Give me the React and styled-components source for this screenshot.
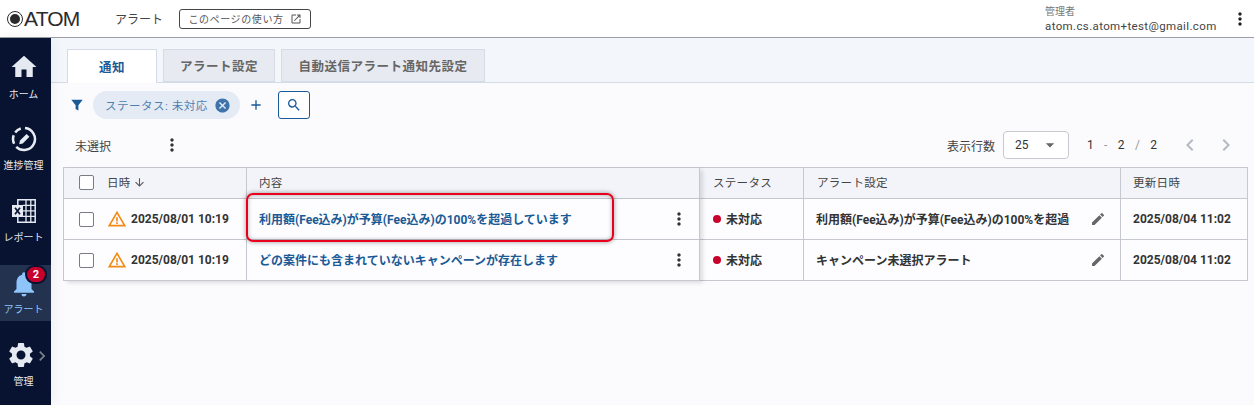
import React from "react";
import styled, { createGlobalStyle } from "styled-components";
import {
  MdHome,
  MdNotifications,
  MdSettings,
  MdChevronLeft,
  MdChevronRight,
  MdMoreVert,
  MdOpenInNew,
  MdSearch,
  MdAdd,
  MdCancel,
  MdArrowDropDown,
  MdArrowDownward,
  MdEdit,
  MdWarningAmber,
} from "react-icons/md";

const FONT = `Roboto, "Noto Sans CJK JP", sans-serif`;
const BLUE = "#1a5a96";

const Global = createGlobalStyle`
  html, body { margin: 0; padding: 0; height: 100%; overflow: hidden; }
  body { font-family: ${FONT}; color: #333; background: #fbfbfe; }
  * { box-sizing: border-box; }
`;

const ProgressIcon = () => (
  <svg width="26" height="26" viewBox="0 0 26 26" fill="none">
    <path d="M14 2.05A11 11 0 1 1 5.2 20.8" stroke="#e8ecf4" strokeWidth="2.5" />
    <path d="M3.1 17.7A11 11 0 0 1 2.7 9.2" stroke="#e8ecf4" strokeWidth="2.5" />
    <path d="M4.2 6.4A11 11 0 0 1 9.8 2.5" stroke="#e8ecf4" strokeWidth="2.5" />
    <path d="M8.2 18.2L9 14.6L15.6 8L18.4 10.8L11.8 17.4Z" fill="#e8ecf4" />
  </svg>
);

const ExcelIcon = () => (
  <svg width="24" height="24" viewBox="0 0 24 24">
    <path d="M5.8 0.8H23.2V23.2H5.8Z" fill="none" stroke="#e4e9f2" strokeWidth="1.5" />
    <path d="M14 1V23M18.8 1V23M11 6.3H23M11 11.8H23M11 17.3H23" stroke="#e4e9f2" strokeWidth="1.3" />
    <rect x="0" y="6" width="11" height="12" fill="#e4e9f2" />
    <path d="M3 8.8L8 15.2M8 8.8L3 15.2" stroke="#071330" strokeWidth="1.7" />
  </svg>
);

const FunnelIcon = () => (
  <svg width="12" height="12" viewBox="0 0 12 12">
    <path d="M0.3 0.8H11.7L7.4 6.2V11.4L4.6 10V6.2Z" fill={BLUE} />
  </svg>
);

const Page = styled.div`
  width: 1254px;
  height: 405px;
  display: flex;
  flex-direction: column;
  overflow: hidden;
`;

const Header = styled.header`
  height: 38px;
  flex: none;
  display: flex;
  align-items: center;
  background: #fff;
  border-bottom: 1px solid #9c9ea3;
  padding-left: 7px;
`;

const Logo = styled.div`
  display: flex;
  align-items: center;
  font-family: "Liberation Sans", sans-serif;
  font-size: 21px;
  letter-spacing: -0.8px;
  color: #2b2b2e;
  width: 108px;
`;

const LogoMark = styled.span`
  width: 16px;
  height: 16px;
  border: 1.5px solid #2b2b2e;
  border-radius: 50%;
  display: flex;
  align-items: center;
  justify-content: center;
  margin-right: 1px;
  &::after {
    content: "";
    width: 10px;
    height: 10px;
    border-radius: 50%;
    background: #2b2b2e;
  }
`;

const PageTitle = styled.div`
  font-size: 12px;
  color: #444;
  width: 64px;
`;

const HelpButton = styled.div`
  width: 132px;
  height: 20px;
  border: 1px solid #444;
  border-radius: 3px;
  display: flex;
  align-items: center;
  justify-content: center;
  gap: 6px;
  font-size: 10px;
  letter-spacing: 0.6px;
  color: #555;
`;

const UserBox = styled.div`
  margin-left: auto;
  width: 172px;
  font-size: 10px;
  color: #777;
  line-height: 13px;
  padding-top: 1px;
`;

const UserMail = styled.div`
  font-size: 11.5px;
  line-height: 16px;
  letter-spacing: 0.37px;
  color: #444;
`;

const HeaderMenu = styled.div`
  width: 37px;
  display: flex;
  color: #222;
  padding-left: 13px;
`;

const Body = styled.div`
  flex: 1;
  display: flex;
  min-height: 0;
`;

const Sidebar = styled.nav`
  width: 51px;
  flex: none;
  background: #071330;
  display: flex;
  flex-direction: column;
  position: relative;
  box-shadow: 0 0 14px rgba(0, 0, 0, 0.07);
`;

const NavItem = styled.div`
  height: ${(p) => p.$h}px;
  display: flex;
  flex-direction: column;
  align-items: center;
  padding: ${(p) => p.$pt}px 4px 0 0;
  background: ${(p) => (p.$active ? "#22324f" : "transparent")};
  color: ${(p) => (p.$active ? "#8fc4fb" : "#e4e9f2")};
  position: relative;
`;

const NavLabel = styled.span`
  font-size: 10px;
  line-height: 13px;
  margin-top: ${(p) => p.$mt}px;
  white-space: nowrap;
`;

const GearBox = styled.span`
  display: flex;
  margin-right: 5px;
`;

const Badge = styled.span`
  position: absolute;
  top: 0;
  left: 25px;
  width: 22px;
  height: 19px;
  border-radius: 10px;
  background: #c8002c;
  border: 2px solid #071330;
  color: #fff;
  font-size: 11px;
  font-weight: 700;
  display: flex;
  align-items: center;
  justify-content: center;
`;

const SideArrow = styled.span`
  position: absolute;
  top: 25px;
  left: 32px;
  color: #7b818d;
  display: flex;
`;

const Main = styled.main`
  flex: 1;
  min-width: 0;
  background: #fbfbfe;
`;

const TabStrip = styled.div`
  height: 45px;
  background: #f3f6fb;
  border-bottom: 1px solid #d5dbe7;
  padding: 11px 0 0 16px;
  display: flex;
  gap: 6px;
  align-items: flex-start;
`;

const Tab = styled.div`
  width: ${(p) => p.$w}px;
  height: ${(p) => (p.$active ? 34 : 33)}px;
  border: 1px solid #d5dbe7;
  border-bottom: ${(p) => (p.$active ? "none" : "1px solid #d5dbe7")};
  background: ${(p) => (p.$active ? "#fff" : "#e7eaf1")};
  color: ${(p) => (p.$active ? BLUE : "#666")};
  font-size: 12.5px;
  font-weight: 700;
  letter-spacing: 0.5px;
  display: flex;
  align-items: center;
  justify-content: center;
`;

const FilterRow = styled.div`
  height: 28px;
  margin-top: 8px;
  padding-left: 20px;
  display: flex;
  align-items: center;
`;

const Chip = styled.div`
  width: 147px;
  height: 28px;
  margin-left: 10px;
  border-radius: 14px;
  background: #e5ebf5;
  color: #4f7fae;
  font-size: 11.5px;
  letter-spacing: 0.5px;
  display: flex;
  align-items: center;
  padding-left: 12px;
  gap: 6px;
  white-space: nowrap;
`;

const PlusBox = styled.span`
  margin-left: 8px;
  width: 16px;
  display: flex;
  color: ${BLUE};
`;

const SearchButton = styled.div`
  width: 32px;
  height: 28px;
  margin-left: 14px;
  border: 1px solid ${BLUE};
  border-radius: 3px;
  background: #fff;
  color: ${BLUE};
  display: flex;
  align-items: center;
  justify-content: center;
`;

const ToolRow = styled.div`
  height: 28px;
  margin-top: 12px;
  padding: 0 16px 0 24px;
  display: flex;
  align-items: center;
`;

const Unselected = styled.span`
  font-size: 12px;
  color: #444;
  width: 87px;
`;

const KebabBox = styled.span`
  display: flex;
  color: #333;
`;

const RowsLabel = styled.span`
  margin-left: auto;
  font-size: 12px;
  color: #444;
`;

const RowsSelect = styled.div`
  width: 66px;
  height: 28px;
  margin-left: 8px;
  border: 1px solid #c6c9d0;
  border-radius: 4px;
  background: #fff;
  display: flex;
  align-items: center;
  justify-content: space-between;
  padding: 0 8px 0 11px;
  font-size: 12px;
  color: #333;
`;

const Pager = styled.div`
  width: 70px;
  margin-left: 18px;
  display: flex;
  justify-content: space-between;
  font-size: 12px;
  color: #333;
`;

const PagerDim = styled.span`
  color: #999;
`;

const PagerArrows = styled.div`
  margin-left: 21px;
  display: flex;
  gap: 12px;
  color: #b4bac4;
`;

const TableWrap = styled.div`
  position: relative;
  margin: 8px 7px 0 12px;
`;

const Table = styled.table`
  width: 100%;
  table-layout: fixed;
  border-collapse: separate;
  border-spacing: 0;
  background: #fff;
  border-top: 1px solid #c6c8cf;
  border-left: 1px solid #c6c8cf;
`;

const Th = styled.th`
  height: 31px;
  padding: 0 0 2px ${(p) => p.$pl}px;
  border-right: 1px solid #c6c8cf;
  border-bottom: 1px solid #c6c8cf;
  background: #f3f4f9;
  font-size: 11.5px;
  font-weight: 400;
  color: #444;
  text-align: left;
  letter-spacing: 0.3px;
  position: relative;
  z-index: ${(p) => (p.$sticky ? 1 : 0)};
  box-shadow: ${(p) => (p.$sticky ? "3px 2px 4px rgba(0, 0, 0, 0.12)" : "none")};
`;

const Td = styled.td`
  height: 41px;
  padding: 0 0 0 ${(p) => p.$pl}px;
  border-right: 1px solid #c6c8cf;
  border-bottom: 1px solid #c6c8cf;
  background: #fdfdff;
  font-size: 12px;
  font-weight: 700;
  color: #333;
  white-space: nowrap;
  position: relative;
  z-index: ${(p) => (p.$sticky ? 1 : 0)};
  box-shadow: ${(p) => (p.$sticky ? "3px 2px 4px rgba(0, 0, 0, 0.12)" : "none")};
`;

const CellRow = styled.div`
  display: flex;
  align-items: center;
`;

const CellText = styled.span`
  margin-bottom: 2px;
`;

const Check = styled.span`
  width: 15px;
  height: 15px;
  flex: none;
  border: 1.5px solid #777c85;
  border-radius: 2px;
  background: #fff;
  margin-right: 13px;
`;

const DateText = styled.span`
  margin-left: 4px;
  font-size: 12px;
`;

const SortIcon = styled.span`
  display: flex;
  margin-left: 2px;
  color: #555;
`;

const AlertLink = styled(CellText)`
  color: ${BLUE};
  flex: 1;
`;

const CellAction = styled.span`
  display: flex;
  margin-left: auto;
  margin-right: ${(p) => p.$mr}px;
  color: ${(p) => p.$color};
`;

const Dot = styled.span`
  width: 8px;
  height: 8px;
  border-radius: 50%;
  background: #c8002c;
  margin-right: 5px;
`;

const Highlight = styled.div`
  position: absolute;
  z-index: 2;
  left: 183px;
  top: 26px;
  width: 368px;
  height: 49px;
  border: 2px solid #e8001c;
  border-radius: 7px;
  box-shadow: 0 0 5px rgba(0, 0, 0, 0.4), inset 0 0 4px rgba(0, 0, 0, 0.3);
  pointer-events: none;
`;

const rows = [
  {
    time: "2025/08/01 10:19",
    text: "利用額(Fee込み)が予算(Fee込み)の100%を超過しています",
    setting: "利用額(Fee込み)が予算(Fee込み)の100%を超過",
    updated: "2025/08/04 11:02",
  },
  {
    time: "2025/08/01 10:19",
    text: "どの案件にも含まれていないキャンペーンが存在します",
    setting: "キャンペーン未選択アラート",
    updated: "2025/08/04 11:02",
  },
];

export default function App() {
  return (
    <Page>
      <Global />
      <Header>
        <Logo>
          <LogoMark />
          ATOM
        </Logo>
        <PageTitle>アラート</PageTitle>
        <HelpButton>
          このページの使い方
          <MdOpenInNew size={12} />
        </HelpButton>
        <UserBox>
          管理者
          <UserMail>atom.cs.atom+test@gmail.com</UserMail>
        </UserBox>
        <HeaderMenu>
          <MdMoreVert size={20} />
        </HeaderMenu>
      </Header>
      <Body>
        <Sidebar>
          <NavItem $h={71} $pt={14}>
            <MdHome size={30} />
            <NavLabel $mt={6}>ホーム</NavLabel>
          </NavItem>
          <NavItem $h={66} $pt={17}>
            <ProgressIcon />
            <NavLabel $mt={7}>進捗管理</NavLabel>
          </NavItem>
          <NavItem $h={90} $pt={24}>
            <ExcelIcon />
            <NavLabel $mt={8}>レポート</NavLabel>
          </NavItem>
          <NavItem $h={56} $pt={4} $active>
            <MdNotifications size={30} />
            <NavLabel $mt={4}>アラート</NavLabel>
            <Badge>2</Badge>
          </NavItem>
          <NavItem $h={84} $pt={19}>
            <SideArrow>
              <MdChevronRight size={20} />
            </SideArrow>
            <GearBox>
              <MdSettings size={30} />
            </GearBox>
            <NavLabel $mt={5}>管理</NavLabel>
          </NavItem>
        </Sidebar>
        <Main>
          <TabStrip>
            <Tab $w={90} $active>通知</Tab>
            <Tab $w={112}>アラート設定</Tab>
            <Tab $w={204}>自動送信アラート通知先設定</Tab>
          </TabStrip>
          <FilterRow>
            <FunnelIcon />
            <Chip>
              ステータス: 未対応
              <MdCancel size={17} color="#3f74ab" />
            </Chip>
            <PlusBox>
              <MdAdd size={16} />
            </PlusBox>
            <SearchButton>
              <MdSearch size={16} />
            </SearchButton>
          </FilterRow>
          <ToolRow>
            <Unselected>未選択</Unselected>
            <KebabBox>
              <MdMoreVert size={20} />
            </KebabBox>
            <RowsLabel>表示行数</RowsLabel>
            <RowsSelect>
              25
              <MdArrowDropDown size={20} color="#666" />
            </RowsSelect>
            <Pager>
              <span>1</span>
              <PagerDim>-</PagerDim>
              <span>2</span>
              <PagerDim>/</PagerDim>
              <span>2</span>
            </Pager>
            <PagerArrows>
              <MdChevronLeft size={24} />
              <MdChevronRight size={24} />
            </PagerArrows>
          </ToolRow>
          <TableWrap>
            <Table>
              <colgroup>
                <col width="183" />
                <col width="453" />
                <col width="104" />
                <col width="317" />
                <col width="127" />
              </colgroup>
              <thead>
                <tr>
                  <Th $pl={15} $sticky>
                    <CellRow>
                      <Check />
                      日時
                      <SortIcon>
                        <MdArrowDownward size={13} />
                      </SortIcon>
                    </CellRow>
                  </Th>
                  <Th $pl={12} $sticky>内容</Th>
                  <Th $pl={13}>ステータス</Th>
                  <Th $pl={13}>アラート設定</Th>
                  <Th $pl={12}>更新日時</Th>
                </tr>
              </thead>
              <tbody>
                {rows.map((row, i) => (
                  <tr key={i}>
                    <Td $pl={15} $sticky>
                      <CellRow>
                        <Check />
                        <MdWarningAmber size={20} color="#f58a12" />
                        <DateText>{row.time}</DateText>
                      </CellRow>
                    </Td>
                    <Td $pl={12} $sticky>
                      <CellRow>
                        <AlertLink>{row.text}</AlertLink>
                        <CellAction $mr={10} $color="#333">
                          <MdMoreVert size={20} />
                        </CellAction>
                      </CellRow>
                    </Td>
                    <Td $pl={13}>
                      <CellRow>
                        <Dot />
                        <CellText>未対応</CellText>
                      </CellRow>
                    </Td>
                    <Td $pl={12}>
                      <CellRow>
                        <CellText>{row.setting}</CellText>
                        <CellAction $mr={14} $color="#666">
                          <MdEdit size={16} />
                        </CellAction>
                      </CellRow>
                    </Td>
                    <Td $pl={12}>{row.updated}</Td>
                  </tr>
                ))}
              </tbody>
            </Table>
            <Highlight />
          </TableWrap>
        </Main>
      </Body>
    </Page>
  );
}
